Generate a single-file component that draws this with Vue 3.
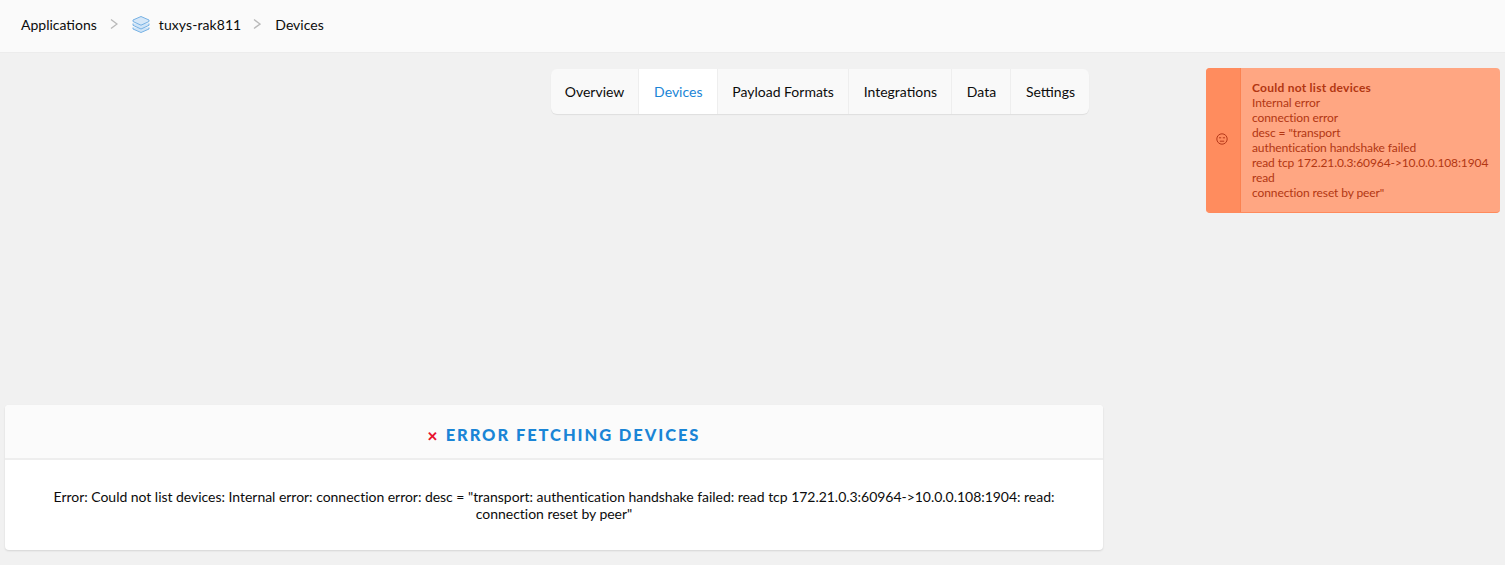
<template>
  <div class="page">
    <header class="topbar">
      <nav class="crumbs">
        <span>Applications</span>
        <svg class="chev" viewBox="0 0 8 12" width="8" height="12"><path d="M1 1.500l6 4.500-6 4.500" fill="none" stroke="#b9b9b9" stroke-width="1.4" /></svg>
        <span class="app">
          <svg class="stack" viewBox="0 0 18 18" width="18" height="18">
            <path d="M1 12.500v1.500l8 3.500 8-3.500v-1.500" fill="#cfe4f7" stroke="#76b1e4" stroke-width="1" stroke-linejoin="round" />
            <path d="M1 8.500v1.800l8 3.700 8-3.700V8.500" fill="#cfe4f7" stroke="#76b1e4" stroke-width="1" stroke-linejoin="round" />
            <path d="M9 1.500l8 3.500v1.500l-8 3.700-8-3.700V5z" fill="#d5e7f8" stroke="#76b1e4" stroke-width="1" stroke-linejoin="round" />
          </svg>
          <span class="app-name">tuxys-rak811</span>
        </span>
        <svg class="chev" viewBox="0 0 8 12" width="8" height="12"><path d="M1 1.500l6 4.500-6 4.500" fill="none" stroke="#b9b9b9" stroke-width="1.4" /></svg>
        <span>Devices</span>
      </nav>
    </header>

    <main class="main">
      <div class="tabs-row">
        <ul class="tabs">
          <li v-for="t in tabs" :key="t" class="tab" :class="{ active: t === 'Devices' }">{{ t }}</li>
        </ul>
      </div>
      <section class="card">
        <h2 class="card-head"><span class="x">✕</span>ERROR FETCHING DEVICES</h2>
        <p class="card-body">Error: Could not list devices: Internal error: connection error: desc = "transport: authentication handshake failed: read tcp 172.21.0.3:60964-&gt;10.0.0.108:1904: read: connection reset by peer"</p>
      </section>
    </main>

    <aside class="toast">
      <div class="toast-icon">
        <svg viewBox="0 0 12 12" width="12" height="12" fill="none" stroke="#b5391a" stroke-width="1">
          <circle cx="6" cy="6" r="5.200" />
          <path d="M3 4.800h2.200M6.800 4.800H9M3.800 8.200h4.400" />
        </svg>
      </div>
      <div class="toast-text">
        <strong>Could not list devices</strong>
        <span v-for="l in lines" :key="l">{{ l }}</span>
      </div>
    </aside>
  </div>
</template>

<script setup>
const tabs = ['Overview', 'Devices', 'Payload Formats', 'Integrations', 'Data', 'Settings']
const lines = [
  'Internal error',
  'connection error',
  'desc = "transport',
  'authentication handshake failed',
  'read tcp 172.21.0.3:60964->10.0.0.108:1904',
  'read',
  'connection reset by peer"',
]
</script>

<style>
html, body { margin: 0; background: #f1f1f1; }
</style>

<style scoped>
.page {
  position: relative;
  height: 565px;
  overflow: hidden;
  background: #f1f1f1;
  font-family: Lato, "Open Sans", sans-serif;
  color: #0c0c0c;
}
.topbar {
  height: 53px;
  box-sizing: border-box;
  background: #fafafa;
  border-bottom: 1px solid #ececec;
  display: flex;
  align-items: center;
  padding: 0 0 4px 21px;
  font-size: 14px;
}
.crumbs { display: flex; align-items: center; }
.chev { margin: 0 14px 0 13px; }
.app { display: flex; align-items: center; gap: 9px; margin-right: -1px; }
.app-name { letter-spacing: 0.08px; }
.main { width: 1098px; margin-left: 5px; }
.tabs-row {
  display: flex;
  justify-content: flex-end;
  padding: 16px 14px 0 0;
  height: 352px;
  box-sizing: border-box;
}
.tabs {
  display: flex;
  height: 45px;
  margin: 0;
  padding: 0;
  list-style: none;
  background: #f9f9f9;
  border-radius: 6px;
  box-shadow: 0 1px 1px rgba(0, 0, 0, 0.08);
  overflow: hidden;
  font-size: 14px;
}
.tab {
  display: flex;
  align-items: center;
  padding: 0 14px 0 14.75px;
  border-left: 1px solid #eeeeee;
}
.tab:first-child { border-left: 0; padding-left: 14px; }
.tab.active { background: #fff; color: #1a85d6; }
.card {
  height: 145px;
  background: #fff;
  border-radius: 4px;
  box-shadow: 0 1px 2px rgba(0, 0, 0, 0.12);
  overflow: hidden;
}
.card-head {
  height: 55px;
  box-sizing: border-box;
  margin: 0;
  padding: 7px 0 0 19px;
  background: #fbfbfb;
  border-bottom: 2px solid #eeeeee;
  display: flex;
  align-items: center;
  justify-content: center;
  font-size: 16.5px;
  font-weight: 900;
  letter-spacing: 1.92px;
  color: #1a85d6;
}
.x { color: #e8112d; font-size: 13px; letter-spacing: 0; margin-right: 8px; margin-top: 2px; }
.card-body {
  margin: 0;
  padding: 28px 40px 0;
  font-size: 14px;
  line-height: 17px;
  letter-spacing: -0.03px;
  text-align: center;
}
.toast {
  position: absolute;
  left: 1206px;
  top: 68px;
  width: 294px;
  height: 145px;
  display: flex;
  background: #ffa682;
  border-radius: 4px;
  border-bottom: 1px solid #ff8a5c;
  box-sizing: border-box;
  overflow: hidden;
  color: #b23612;
  font-size: 12px;
  line-height: 15px;
}
.toast-icon {
  flex: none;
  background: #ff8c5e;
  border-right: 1px solid #fb8250;
  display: flex;
  align-items: center;
  justify-content: center;
  padding: 0 3px 3px 0;
  width: 31px;
}
.toast-text {
  display: flex;
  flex-direction: column;
  padding: 12px 0 0 11px;
  white-space: nowrap;
  letter-spacing: -0.1px;
}
.toast-text strong { font-weight: 700; letter-spacing: 0.25px; }
</style>
